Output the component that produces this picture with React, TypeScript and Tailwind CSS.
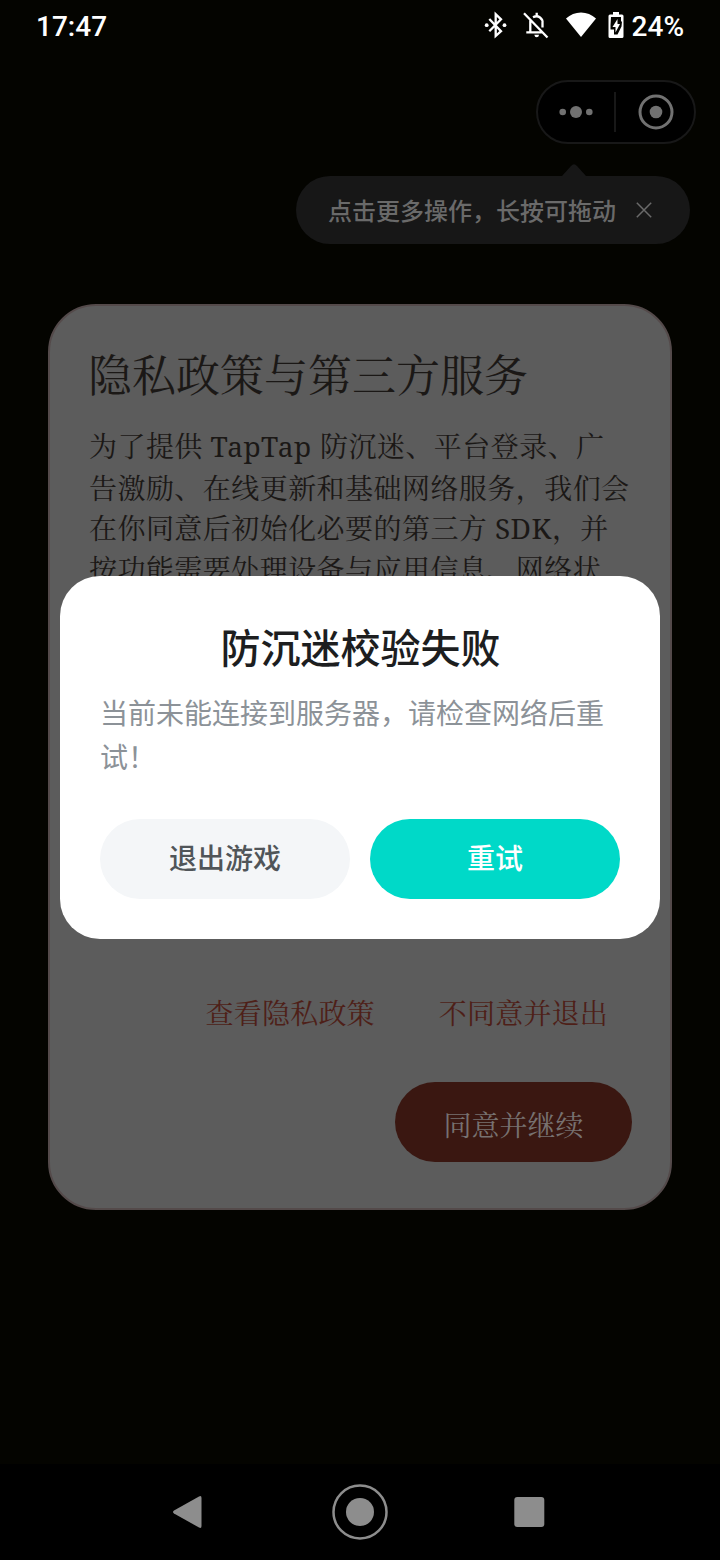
import type { ReactNode } from 'react'

const SERIF = "font-['Noto_Serif_CJK_SC','Noto_Sans_CJK_SC',serif]"
const SANS = "font-['Noto_Sans_CJK_SC',sans-serif]"

const policyLines: ReactNode[] = [
  <>为了提供 <Latin width="w-[102px]">TapTap</Latin> 防沉迷、平台登录、广</>,
  <>告激励、在线更新和基础网络服务，我们会</>,
  <>在你同意后初始化必要的第三方 <Latin width="w-[57px]">SDK</Latin>，并</>,
  <>按功能需要处理设备与应用信息、网络状</>,
]

function Latin({ width, children }: { width: string, children: ReactNode }) {
  return <span className={`inline-block font-['Noto_Serif','Noto_Serif_CJK_SC',serif] leading-none font-normal ${width}`}>{children}</span>
}

function BluetoothIcon() {
  return (
    <svg className="mb-0.5 h-7 w-6" viewBox="0 0 24 28" fill="none" stroke="currentColor" strokeWidth="2.300">
      <path d="M5.300 8 17 20.200 11.700 25V3.200L17 8.300 5.300 20.300" />
      <circle cx="2.700" cy="14.200" r="1.900" fill="currentColor" stroke="none" />
      <circle cx="20.500" cy="14.200" r="1.900" fill="currentColor" stroke="none" />
    </svg>
  )
}

function BellOffIcon() {
  return (
    <svg className="mb-0.5 ml-3.5 size-7" viewBox="0 0 28 28" fill="none" stroke="currentColor" strokeWidth="2.300">
      <path d="m2 2.300 23.500 24.200M8.300 9.500V21M4.300 21.300h15.500M11 6.200Q15 4.200 18 6.500T20.500 12v4.500M14.700 1.800v4" />
      <path d="M12.300 23.700h4.800q-.4 2.600-2.400 2.600t-2.400-2.600z" fill="currentColor" stroke="none" />
    </svg>
  )
}

function StatusBar() {
  return (
    <div className="flex h-[52px] items-center pr-9 pl-9 font-[Roboto,sans-serif] text-[28px] font-medium text-white">
      <span className="mt-0.5 leading-none">17:47</span>
      <div className="ml-auto flex items-center">
        <BluetoothIcon />
        <BellOffIcon />
        <svg className="mb-[3px] ml-4 h-[26px] w-[30px]" viewBox="0 0 30 26" fill="currentColor">
          <path d="M15 25 0 6.500Q6.500 0.500 15 0.500T30 6.500Z" />
        </svg>
        <svg className="mb-0.5 ml-3 h-[26px] w-4" viewBox="0 0 16 26">
          <path fill="currentColor" d="M5 0h6v2.500h3q1.500 0 1.500 1.500v20.500q0 1.500-1.500 1.500h-12Q.5 26 .5 24.500V4Q.5 2.500 2 2.500h3z" />
          <path fill="#040400" d="M3 5h10v4.500h1l-.5 5L9.500 22.500H6v-5H2.500v-4.500z" />
          <path fill="currentColor" d="M9.500 7 4.500 15h3v5.500l4.500-8.500H9.500z" />
        </svg>
        <span className="mt-0.5 ml-2 leading-none">24%</span>
      </div>
    </div>
  )
}

function Capsule() {
  return (
    <div className="mt-7 mr-6 flex h-16 w-40 items-center self-end rounded-full border-2 border-[#181818] bg-black text-[#717171]">
      <svg className="ml-5 h-3 w-9" viewBox="0 0 36 12" fill="currentColor">
        <circle cx="4.700" cy="6" r="3.300" />
        <circle cx="18" cy="6" r="6" />
        <circle cx="31.300" cy="6" r="3.300" />
      </svg>
      <div className="ml-5 h-10 w-0.5 bg-[#181818]" />
      <svg className="ml-[22px] size-9" viewBox="0 0 36 36">
        <circle cx="18" cy="18" r="16" fill="none" stroke="currentColor" strokeWidth="3" />
        <circle cx="18" cy="18" r="6.300" fill="currentColor" />
      </svg>
    </div>
  )
}

function Tooltip() {
  return (
    <div className="mt-5 mr-[30px] flex w-[394px] flex-col self-end text-[#171717]">
      <svg className="ml-[266px] h-3 w-6" viewBox="0 0 24 12" fill="currentColor">
        <path d="M0 12 9 2q3-3.500 6 0l9 10z" />
      </svg>
      <div className="flex h-[68px] items-center rounded-full bg-[#171717] pl-8 text-[#6a6a6a]">
        <span className={`${SANS} text-2xl leading-none font-medium whitespace-nowrap`}>点击更多操作，长按可拖动</span>
        <svg className="ml-5 size-4" viewBox="0 0 16 16" stroke="currentColor" strokeWidth="1.500">
          <path d="m.8.8 14.400 14.400M15.200.8.8 15.200" />
        </svg>
      </div>
    </div>
  )
}

function PolicyCard() {
  return (
    <section className={`${SERIF} mx-12 mt-[60px] flex h-[906px] flex-col rounded-[48px] border-2 border-[#544a4a] bg-[#5c5c5c] px-[38px] text-[#1b1816]`}>
      <h1 className="mt-[37px] text-[44px] leading-[60px] font-normal whitespace-nowrap">隐私政策与第三方服务</h1>
      <div className="mt-[22px] ml-px text-[28px] leading-[41px] font-normal tracking-[0.450px] whitespace-nowrap">
        {policyLines.map((line, i) => <p key={i} className="nth-2:-mb-px nth-2:pt-px">{line}</p>)}
      </div>
      <div className="mt-auto flex justify-end gap-16 pr-6 text-[28px] leading-10 font-normal tracking-[0.200px] text-[#4e1f18]">
        <span>查看隐私政策</span>
        <span>不同意并退出</span>
      </div>
      <button className="mt-[50px] mb-[46px] h-20 w-[237px] self-end rounded-full bg-[#3a1711] pt-[3px] text-[28px] font-normal text-[#777170]">
        同意并继续
      </button>
    </section>
  )
}

function FailDialog() {
  return (
    <div role="dialog" className={`${SANS} absolute top-[576px] left-[60px] flex h-[363px] w-[600px] flex-col rounded-[40px] bg-white px-10 pt-[38px] pb-10`}>
      <h2 className="pl-px text-center text-[40px] leading-[64px] font-medium text-[#1d1e1f]">防沉迷校验失败</h2>
      <p className="mt-3 text-[28px] leading-[44px] font-normal text-[#8c9298]">当前未能连接到服务器，请检查网络后重试！</p>
      <div className="mt-auto flex gap-5 text-[28px] font-medium">
        <button className="h-20 flex-1 rounded-full bg-[#f4f6f8] pb-1 text-[#505559]">退出游戏</button>
        <button className="h-20 flex-1 rounded-full bg-[#00d9c8] pb-1 text-white">重试</button>
      </div>
    </div>
  )
}

function NavBar() {
  return (
    <nav className="mt-auto flex h-24 items-center justify-center gap-[114px] bg-black text-[#8d8d8d]">
      <svg className="size-14" viewBox="0 0 56 56" fill="currentColor">
        <path d="M12 26.500 37 12.500q2.500-1.300 2.500 1.500v28q0 2.800-2.500 1.500L12 29.500q-2-1.500 0-3z" />
      </svg>
      <svg className="size-14" viewBox="0 0 56 56">
        <circle cx="28" cy="28" r="26.500" fill="none" stroke="currentColor" strokeWidth="2.500" />
        <circle cx="28" cy="28" r="14" fill="currentColor" />
      </svg>
      <svg className="size-14" viewBox="0 0 56 56" fill="currentColor">
        <rect x="12.300" y="13" width="30" height="30" rx="3" />
      </svg>
    </nav>
  )
}

export default function App() {
  return (
    <main className="relative flex h-[1560px] w-[720px] flex-col overflow-hidden bg-[#040400]">
      <StatusBar />
      <Capsule />
      <Tooltip />
      <PolicyCard />
      <NavBar />
      <FailDialog />
    </main>
  )
}
